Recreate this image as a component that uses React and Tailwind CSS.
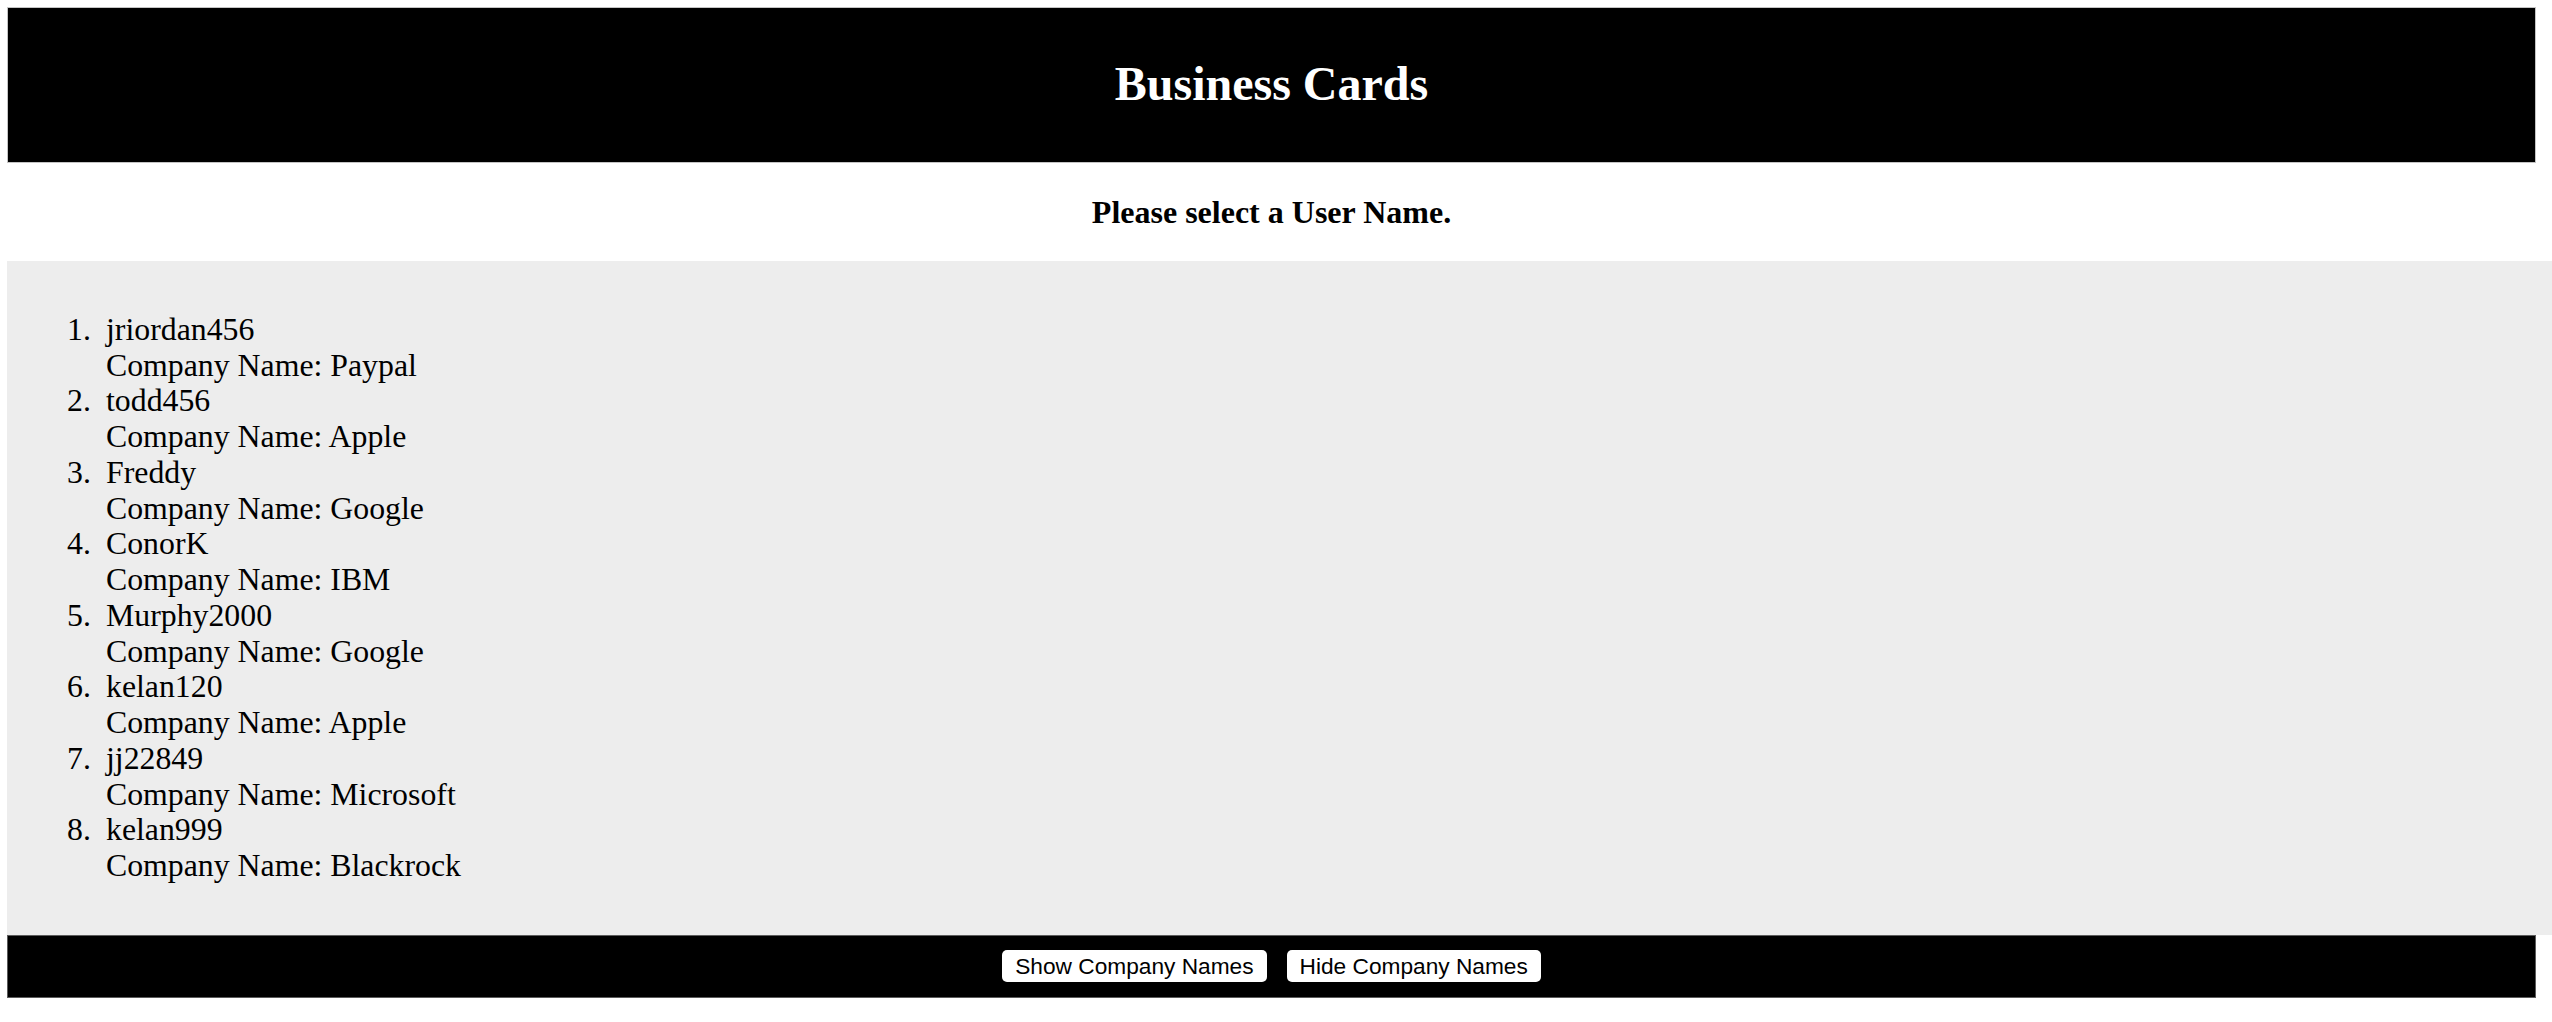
const users = [
  { name: "jriordan456", company: "Paypal" },
  { name: "todd456", company: "Apple" },
  { name: "Freddy", company: "Google" },
  { name: "ConorK", company: "IBM" },
  { name: "Murphy2000", company: "Google" },
  { name: "kelan120", company: "Apple" },
  { name: "jj22849", company: "Microsoft" },
  { name: "kelan999", company: "Blackrock" },
];

const App = () => {
  return (
    <div className="min-h-screen bg-white pt-[7px] font-['Liberation_Serif','Times_New_Roman',serif] text-black">
      <header className="ml-[7px] mr-[16px] flex h-[156px] items-center justify-center border border-[#c4c4c4] bg-black">
        <h1 className="-mt-[2px] text-[48px] font-bold text-white">
          Business Cards
        </h1>
      </header>

      <div className="ml-[7px] mr-[16px] flex h-[98px] items-center justify-center">
        <h4 className="-mt-[1px] text-[32px] font-bold">
          Please select a User Name.
        </h4>
      </div>

      <section className="ml-[7px] bg-[#ededed] py-[51px] pl-[60px]">
        <ol className="list-none text-[31.8px] leading-[35.73px]">
          {users.map((u, i) => (
            <li key={u.name} className="flex">
              <span className="w-[39px] shrink-0">{i + 1}.</span>
              <div>
                <div>{u.name}</div>
                <div>Company Name: {u.company}</div>
              </div>
            </li>
          ))}
        </ol>
      </section>

      <footer className="ml-[7px] mr-[16px] flex h-[63px] items-center justify-center gap-[20px] border border-[#5c5c5c] bg-black font-['Liberation_Sans',Arial,sans-serif]">
        <button className="h-[32px] rounded-[5px] bg-white px-[13px] text-[22.7px] leading-none text-black">
          Show Company Names
        </button>
        <button className="h-[32px] rounded-[5px] bg-white px-[13px] text-[22.7px] leading-none text-black">
          Hide Company Names
        </button>
      </footer>
    </div>
  );
};

export default App;
